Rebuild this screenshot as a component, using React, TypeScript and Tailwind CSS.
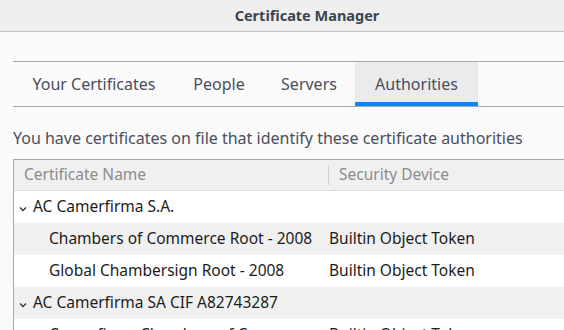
const tabs = [
  { label: "Your Certificates", w: "w-[162px]" },
  { label: "People", w: "w-[88px]" },
  { label: "Servers", w: "w-[92px]" },
  { label: "Authorities", w: "w-[123px]", active: true },
];

const rows = [
  { name: "AC Camerfirma S.A.", group: true },
  { name: "Chambers of Commerce Root - 2008", device: "Builtin Object Token" },
  { name: "Global Chambersign Root - 2008", device: "Builtin Object Token" },
  { name: "AC Camerfirma SA CIF A82743287", group: true },
  { name: "Camerfirma Chambers of Commerce Root", device: "Builtin Object Token" },
];

const App = () => {
  return (
    <div className="w-[564px] h-[330px] overflow-hidden bg-[#fafafa] font-['Noto_Sans',sans-serif] text-[16px]">
      {/* title bar, centred on the full window which is wider than the shot */}
      <div className="h-[32px] bg-[#efefef] border-b border-[#c4c4c4] flex items-center justify-center pl-[50px]">
        <span className="font-bold text-[#3c4450] text-[14.5px]">Certificate Manager</span>
      </div>

      <div className="pl-[13px] pt-[29px]">
        {/* tabs */}
        <div className="flex h-[46px] border-y border-[#a8a8a8] text-[#4a4f5a]">
          {tabs.map((t) => (
            <div
              key={t.label}
              className={`${t.w} relative flex items-center justify-center ${
                t.active ? "bg-[#ebebee]" : ""
              }`}
            >
              <span>{t.label}</span>
              {t.active && (
                <div className="absolute left-0 right-0 bottom-0 h-[4px] bg-[#0a84ff]" />
              )}
            </div>
          ))}
        </div>

        <p className="mt-[20px] text-[#4a4f5a] leading-[22px] whitespace-nowrap">
          You have certificates on file that identify these certificate authorities
        </p>

        {/* tree table */}
        <div className="mt-[10px] border-l border-t border-[#a8a8a8] bg-white text-[15.5px]">
          <div className="h-[31px] flex items-center bg-[#f0f0f0] border-b border-[#dcdcdc] text-[#8c8c8c]">
            <div className="w-[314px] pl-[10px]">Certificate Name</div>
            <div className="h-[20px] w-px bg-[#cfcfcf]" />
            <div className="pl-[10px]">Security Device</div>
          </div>
          {rows.map((r, i) => (
            <div
              key={r.name}
              className={`h-[32px] flex items-center text-[#1c1c1c] ${
                i % 2 === 1 ? "bg-[#f0f0f0]" : "bg-white"
              }`}
            >
              <div className="w-[315px] shrink-0 flex items-center whitespace-nowrap overflow-hidden pr-[2px]">
                {r.group ? (
                  <>
                    <svg width="8" height="6" viewBox="0 0 8 6" className="ml-[5px] mr-[6px] mt-[3px] shrink-0">
                      <path d="M1 1.5 L4 4.5 L7 1.5" fill="none" stroke="#333" strokeWidth="1.3" />
                    </svg>
                    <span>{r.name}</span>
                  </>
                ) : (
                  <span className="block min-w-0 pl-[35px] truncate">{r.name}</span>
                )}
              </div>
              {r.device && <div className="whitespace-nowrap">{r.device}</div>}
            </div>
          ))}
        </div>
      </div>
    </div>
  );
};

export default App;
